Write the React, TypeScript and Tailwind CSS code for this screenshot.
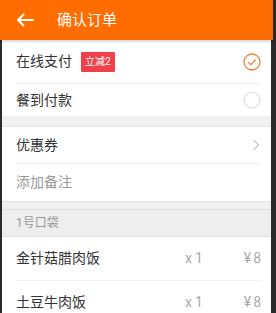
import React from "react";

const font = { fontFamily: '"Roboto", "Noto Sans CJK SC", sans-serif' };

function Item({ name }: { name: string }) {
  return (
    <>
      <span className="text-[14px] text-[#333] flex-1">{name}</span>
      <span className="text-[14px] text-[#aaa] w-[56px]">
        x<span className="ml-[3px]">1</span>
      </span>
      <span className="text-[14px] text-[#aaa] w-[20px] text-right whitespace-nowrap">
        ¥<span className="ml-[2px]">8</span>
      </span>
    </>
  );
}

export default function App() {
  return (
    <div className="w-[276px] h-[313px] overflow-hidden bg-[#2a2a2a] flex" style={font}>
      <div className="w-[271px] h-full flex flex-col bg-[#f0f0f0] border-l-2 border-[#2a2a2a]">
        <div className="h-[40px] shrink-0 bg-[#ff6c00] flex items-center -ml-[2px] w-[273px] shadow-[0_2px_2px_rgba(0,0,0,0.15)] relative z-10">
          <svg width="18" height="14" viewBox="0 0 18 14" className="ml-[16px]">
            <path d="M17 7H2M7.5 1.5L2 7l5.5 5.5" stroke="#fff" strokeWidth="2" fill="none" strokeLinecap="round" strokeLinejoin="round" />
          </svg>
          <span className="ml-[23px] text-[15px] text-white">确认订单</span>
        </div>
        <div className="bg-white pl-[14px] pr-[10px]">
          <div className="h-[44px] flex items-center border-b border-[#f0f0f0]">
            <span className="text-[14px] text-[#333]">在线支付</span>
            <span className="ml-[9px] bg-[#f0414a] text-white text-[10px] px-[4px] h-[20px] leading-[20px] rounded-[1px]">立减2</span>
            <svg width="18" height="18" viewBox="0 0 18 18" className="ml-auto">
              <circle cx="9" cy="9" r="8" stroke="#f08030" strokeWidth="1.3" fill="none" />
              <path d="M5.2 9.2l2.6 2.5 4.8-5" stroke="#f08030" strokeWidth="1.3" fill="none" />
            </svg>
          </div>
          <div className="h-[32px] flex items-center">
            <span className="text-[14px] text-[#333]">餐到付款</span>
            <svg width="18" height="18" viewBox="0 0 18 18" className="ml-auto">
              <circle cx="9" cy="9" r="8" stroke="#dcdcdc" strokeWidth="1.2" fill="none" />
            </svg>
          </div>
        </div>
        <div className="h-[10px] shrink-0" />
        <div className="bg-white pl-[14px] pr-[10px] border-t border-[#e4e4e4]">
          <div className="h-[37px] flex items-center border-b border-[#f0f0f0]">
            <span className="text-[14px] text-[#333]">优惠券</span>
            <svg width="8" height="12" viewBox="0 0 8 12" className="ml-auto mr-[1px]">
              <path d="M1.5 1l5 5-5 5" stroke="#c8c8c8" strokeWidth="1.2" fill="none" />
            </svg>
          </div>
          <div className="h-[37px] flex items-center">
            <span className="text-[14px] text-[#999]">添加备注</span>
          </div>
        </div>
        <div className="h-[9px] shrink-0 border-t border-[#e0e0e0] border-b" />
        <div className="h-[27px] shrink-0 flex items-center pl-[14px] bg-[#eeeeee] border-b border-[#e0e0e0]">
          <span className="text-[12px] text-[#999]">1号口袋</span>
        </div>
        <div className="bg-white pl-[14px] pr-[10px] flex-1">
          <div className="h-[44px] flex items-center border-b border-[#f2f2f2]">
            <Item name="金针菇腊肉饭" />
          </div>
          <div className="h-[42px] flex items-center">
            <Item name="土豆牛肉饭" />
          </div>
        </div>
      </div>
    </div>
  );
}
